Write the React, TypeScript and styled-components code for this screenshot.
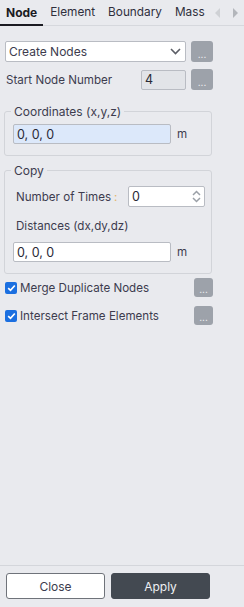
import React, { useState } from 'react';
import styled, { createGlobalStyle } from 'styled-components';

const GlobalStyle = createGlobalStyle`
  html, body {
    margin: 0;
    padding: 0;
    height: 100%;
    background: #e9eaee;
  }
  #root {
    height: 100%;
  }
  * {
    box-sizing: border-box;
  }
`;

const Panel = styled.div`
  height: 100vh;
  display: flex;
  flex-direction: column;
  font-family: Inter, 'Noto Sans', sans-serif;
  font-size: 11.6px;
  color: #3d3c4e;
  background: #e9eaee;
`;

const TabBar = styled.div`
  display: flex;
  align-items: stretch;
  height: 26px;
  border-bottom: 1px solid #d6d8dd;
`;

const Tab = styled.div<{ $active?: boolean }>`
  display: flex;
  align-items: center;
  padding: 0 6px;
  margin-right: 1px;
  font-size: ${(p) => (p.$active ? 12 : 11.8)}px;
  font-weight: ${(p) => (p.$active ? 700 : 400)};
  color: ${(p) => (p.$active ? '#1b1b22' : '#2f2f3c')};
  border-bottom: 2px solid ${(p) => (p.$active ? '#1b1b22' : 'transparent')};
  margin-bottom: -1px;
  white-space: nowrap;
`;

const Arrows = styled.div`
  display: flex;
  align-items: center;
  gap: 13px;
  margin-left: 3px;
`;

const Arrow = styled.span<{ $dir: 'left' | 'right'; $dim?: boolean }>`
  width: 0;
  height: 0;
  border-top: 5px solid transparent;
  border-bottom: 5px solid transparent;
  ${(p) =>
    p.$dir === 'left'
      ? `border-right: 5px solid ${p.$dim ? '#cfd1d5' : '#b3b6bb'};`
      : `border-left: 5px solid ${p.$dim ? '#cfd1d5' : '#b3b6bb'};`}
`;

const Body = styled.div`
  flex: 1;
  padding: 15px 0 0 4px;
  width: 213px;
`;

const Row = styled.div<{ $mt?: number }>`
  display: flex;
  align-items: center;
  margin-top: ${(p) => p.$mt ?? 0}px;
`;

const Select = styled.div`
  flex: 1;
  height: 21px;
  margin-left: 1px;
  display: flex;
  align-items: center;
  justify-content: space-between;
  padding: 0 4px 0 3px;
  background: #fff;
  border: 1px solid #b9bcc3;
  border-radius: 2px;
  color: #3d3c4e;
  font-size: 12px;
`;

const DotsButton = styled.button<{ $w?: number; $h?: number }>`
  width: ${(p) => p.$w ?? 22}px;
  height: ${(p) => p.$h ?? 21}px;
  margin-left: ${(p) => (p.$w ? 0 : 5)}px;
  flex: none;
  border: none;
  border-radius: 3px;
  background: #9da2aa;
  color: #f4f5f7;
  font-family: Inter, sans-serif;
  font-size: 10px;
  line-height: 1;
  padding: 0 0 3px;
  display: flex;
  align-items: flex-end;
  justify-content: center;
`;

const Label = styled.span<{ $pl?: number }>`
  flex: 1;
  padding-left: ${(p) => p.$pl ?? 2}px;
`;

const Input = styled.div<{ $w: number; $bg?: string; $h?: number }>`
  width: ${(p) => p.$w}px;
  height: ${(p) => p.$h ?? 20}px;
  flex: none;
  display: flex;
  align-items: center;
  justify-content: space-between;
  padding: 0 3px 0 3px;
  background: ${(p) => p.$bg ?? '#fff'};
  border: 1px solid #b9bcc3;
  border-radius: 2px;
  color: #2a2a36;
  font-size: 12.5px;
`;

const Unit = styled.span`
  margin-left: 6px;
  color: #3d3c4e;
`;

const Group = styled.fieldset<{ $mt: number }>`
  margin: ${(p) => p.$mt}px 0 0 0;
  padding: 0 6px 11px 8px;
  border: 1px solid #d2d4d9;
  border-radius: 3px;
  width: 208px;
  min-width: 0;
`;

const Legend = styled.legend`
  margin-left: -2px;
  padding: 0 3px;
  font-size: 12px;
  color: #3d3c4e;
`;

const Colon = styled.span`
  color: #e3b56a;
  margin-left: 3px;
`;

const Spin = styled.div`
  display: flex;
  flex-direction: column;
  gap: 1px;
`;

const Check = styled.span`
  width: 12px;
  height: 12px;
  flex: none;
  margin-left: 1px;
  border-radius: 2px;
  background: #1b6fe0;
  display: flex;
  align-items: center;
  justify-content: center;
`;

const CheckLabel = styled.span`
  flex: 1;
  padding-left: 3px;
`;

const Footer = styled.div`
  border-top: 1px solid #d4d6db;
  padding: 7px 0 8px 6px;
  display: flex;
  gap: 6px;
`;

const FooterButton = styled.button<{ $primary?: boolean }>`
  width: 99px;
  height: 26px;
  border-radius: 3px;
  font-family: Inter, sans-serif;
  font-size: 12px;
  cursor: pointer;
  background: ${(p) => (p.$primary ? '#434951' : '#fff')};
  color: ${(p) => (p.$primary ? '#eef0f3' : '#3d3c4e')};
  border: 1px solid ${(p) => (p.$primary ? '#434951' : '#6f737a')};
`;

const Chevron = ({ up }: { up?: boolean }) => (
  <svg width="9" height="6" viewBox="0 0 9 6">
    <path
      d={up ? 'M1 5L4.5 1.5L8 5' : 'M1 1L4.5 4.5L8 1'}
      fill="none"
      stroke="#9ba0a7"
      strokeWidth="1.5"
    />
  </svg>
);

const CheckMark = () => (
  <svg width="9" height="8" viewBox="0 0 9 8">
    <path d="M1.2 4.2L3.5 6.3L7.8 1.5" fill="none" stroke="#fff" strokeWidth="1.7" />
  </svg>
);

const tabs = ['Node', 'Element', 'Boundary', 'Mass'];

const App: React.FC = () => {
  const [active] = useState('Node');

  return (
    <>
      <GlobalStyle />
      <Panel>
        <TabBar>
          {tabs.map((t) => (
            <Tab key={t} $active={t === active}>
              {t}
            </Tab>
          ))}
          <Arrows>
            <Arrow $dir="left" $dim />
            <Arrow $dir="right" />
          </Arrows>
        </TabBar>

        <Body>
          <Row>
            <Select>
              <span>Create Nodes</span>
              <svg width="11" height="7" viewBox="0 0 11 7">
                <path d="M1 1L5.5 5.5L10 1" fill="none" stroke="#5b5e66" strokeWidth="1.6" />
              </svg>
            </Select>
            <DotsButton>...</DotsButton>
          </Row>

          <Row $mt={7}>
            <Label>Start Node Number</Label>
            <Input $w={45} $bg="#e2e4e8">4</Input>
            <DotsButton>...</DotsButton>
          </Row>

          <Group $mt={14}>
            <Legend>Coordinates (x,y,z)</Legend>
            <Row $mt={5}>
              <Input $w={158} $bg="#dce8fa">0, 0, 0</Input>
              <Unit>m</Unit>
            </Row>
          </Group>

          <Group $mt={7}>
            <Legend>Copy</Legend>
            <Row $mt={8}>
              <Label $pl={3}>
                Number of Times<Colon>:</Colon>
              </Label>
              <Input $w={77} $h={21}>
                <span>0</span>
                <Spin>
                  <Chevron up />
                  <Chevron />
                </Spin>
              </Input>
            </Row>
            <Row $mt={12}>
              <Label $pl={3}>Distances (dx,dy,dz)</Label>
            </Row>
            <Row $mt={9}>
              <Input $w={158}>0, 0, 0</Input>
              <Unit>m</Unit>
            </Row>
          </Group>

          <Row $mt={4}>
            <Check>
              <CheckMark />
            </Check>
            <CheckLabel>Merge Duplicate Nodes</CheckLabel>
            <DotsButton $w={19} $h={19}>...</DotsButton>
          </Row>

          <Row $mt={9}>
            <Check>
              <CheckMark />
            </Check>
            <CheckLabel>Intersect Frame Elements</CheckLabel>
            <DotsButton $w={19} $h={19}>...</DotsButton>
          </Row>
        </Body>

        <Footer>
          <FooterButton>Close</FooterButton>
          <FooterButton $primary>Apply</FooterButton>
        </Footer>
      </Panel>
    </>
  );
};

export default App;
